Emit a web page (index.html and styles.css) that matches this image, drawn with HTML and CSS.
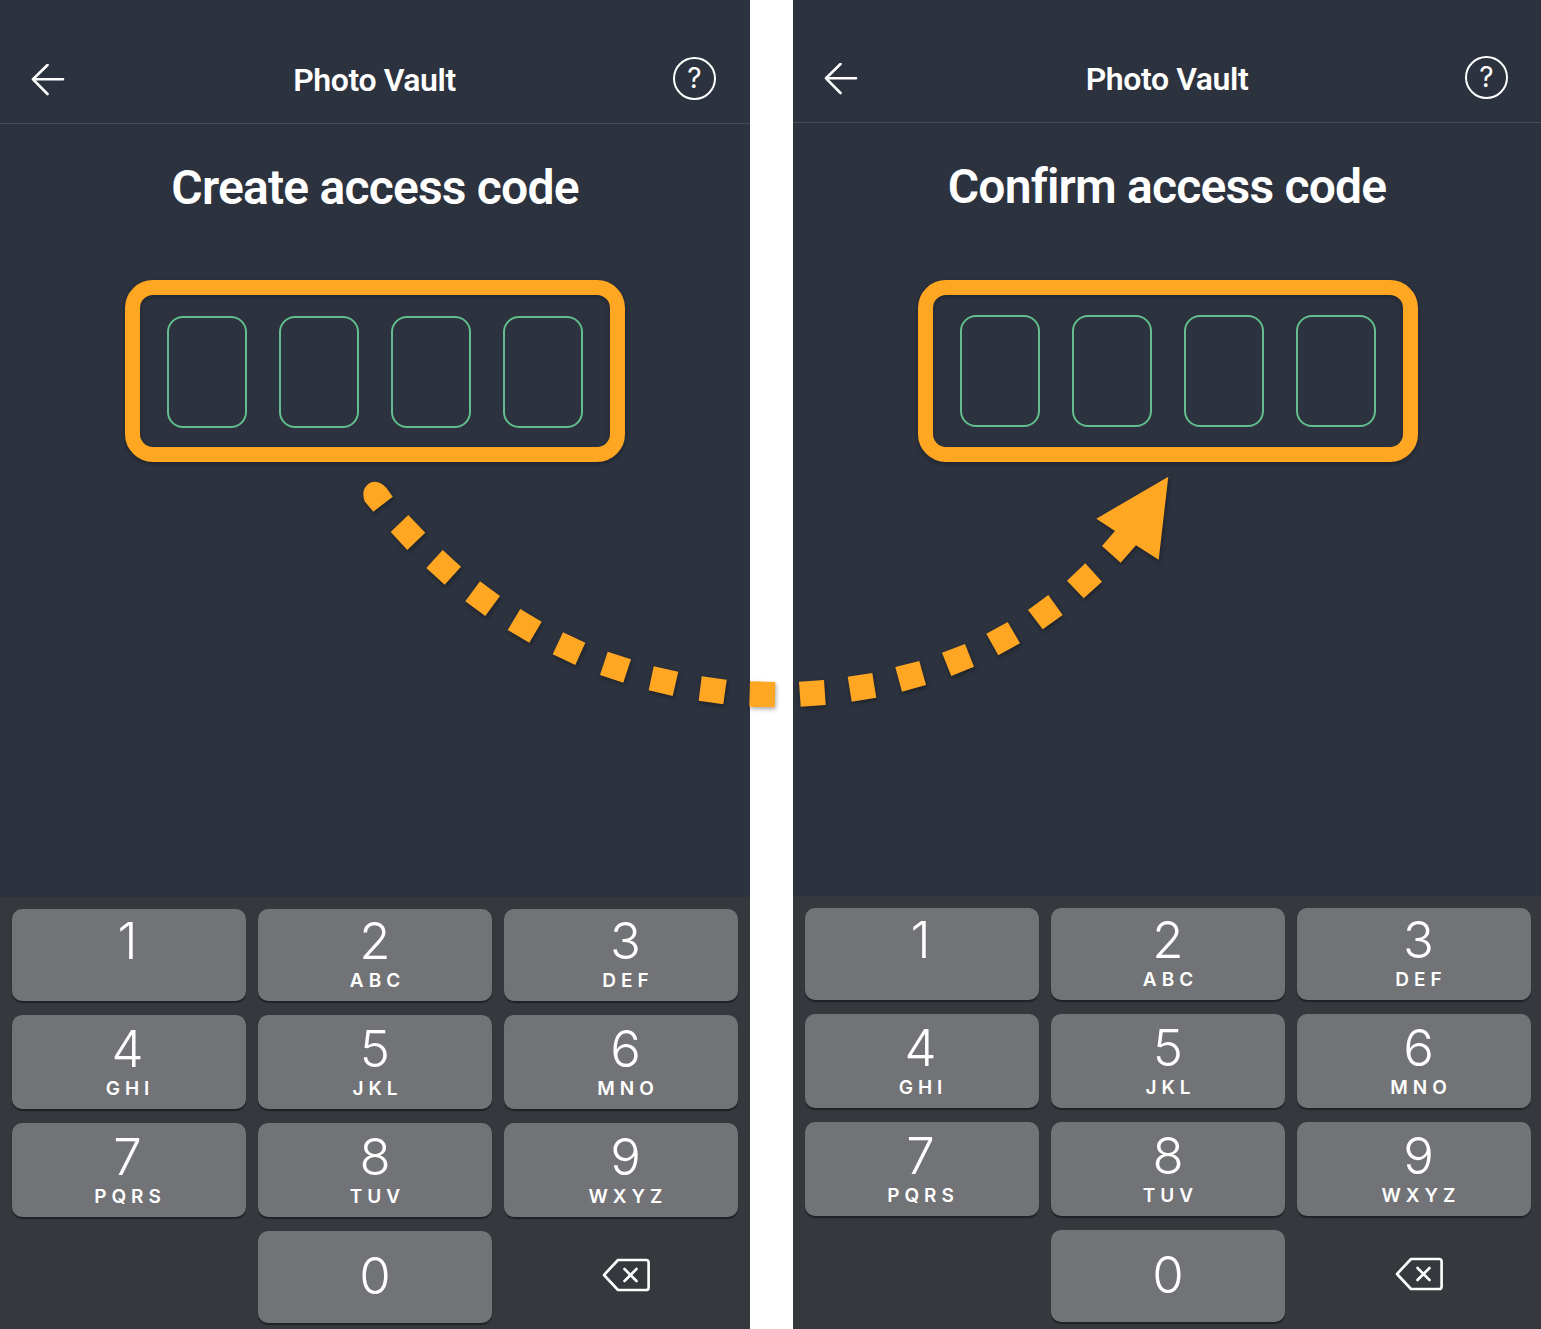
FILE: index.html
```html
<!DOCTYPE html>
<html lang="en">
    <head>
        <meta charset="utf-8">
        <title>Photo Vault access code</title>
        <link rel="stylesheet" href="styles.css">
    </head>
    <body>
        <div class="page">
            <div class="phone">
                <div class="header">
                    <svg class="backIcon" width="34" height="32" viewBox="0 0 34 32"><path d="M32 15.3H2M16.5 1 2 15.3 16.5 30"/></svg>
                    <div class="headerTitle">Photo Vault</div>
                    <div class="helpIcon">?</div>
                </div>
                <h1 class="heading">Create access code</h1>
                <div class="codeBox">
                    <div class="slot"></div>
                    <div class="slot"></div>
                    <div class="slot"></div>
                    <div class="slot"></div>
                </div>
                <div class="keypad">
                    <div class="key"><span class="digit">1</span><span class="letters"></span></div>
                    <div class="key"><span class="digit">2</span><span class="letters">ABC</span></div>
                    <div class="key"><span class="digit">3</span><span class="letters">DEF</span></div>
                    <div class="key"><span class="digit">4</span><span class="letters">GHI</span></div>
                    <div class="key"><span class="digit">5</span><span class="letters">JKL</span></div>
                    <div class="key"><span class="digit">6</span><span class="letters">MNO</span></div>
                    <div class="key"><span class="digit">7</span><span class="letters">PQRS</span></div>
                    <div class="key"><span class="digit">8</span><span class="letters">TUV</span></div>
                    <div class="key"><span class="digit">9</span><span class="letters">WXYZ</span></div>
                    <div class="keyBlank"></div>
                    <div class="key keyZero"><span class="digit">0</span></div>
                    <div class="keyDelete">
                        <svg class="deleteIcon" width="48" height="34" viewBox="0 0 48 34"><path d="M16 2h28a2.6 2.6 0 0 1 2.600 2.600v24.800a2.600 2.600 0 0 1-2.600 2.600h-28L2 17Z"/><path d="M22.500 11 34.500 23M34.500 11 22.500 23"/></svg>
                    </div>
                </div>
            </div>
            <div class="phone phoneRight">
                <div class="header">
                    <svg class="backIcon" width="34" height="32" viewBox="0 0 34 32"><path d="M32 15.3H2M16.5 1 2 15.3 16.5 30"/></svg>
                    <div class="headerTitle">Photo Vault</div>
                    <div class="helpIcon">?</div>
                </div>
                <h1 class="heading">Confirm access code</h1>
                <div class="codeBox">
                    <div class="slot"></div>
                    <div class="slot"></div>
                    <div class="slot"></div>
                    <div class="slot"></div>
                </div>
                <div class="keypad">
                    <div class="key"><span class="digit">1</span><span class="letters"></span></div>
                    <div class="key"><span class="digit">2</span><span class="letters">ABC</span></div>
                    <div class="key"><span class="digit">3</span><span class="letters">DEF</span></div>
                    <div class="key"><span class="digit">4</span><span class="letters">GHI</span></div>
                    <div class="key"><span class="digit">5</span><span class="letters">JKL</span></div>
                    <div class="key"><span class="digit">6</span><span class="letters">MNO</span></div>
                    <div class="key"><span class="digit">7</span><span class="letters">PQRS</span></div>
                    <div class="key"><span class="digit">8</span><span class="letters">TUV</span></div>
                    <div class="key"><span class="digit">9</span><span class="letters">WXYZ</span></div>
                    <div class="keyBlank"></div>
                    <div class="key keyZero"><span class="digit">0</span></div>
                    <div class="keyDelete">
                        <svg class="deleteIcon" width="48" height="34" viewBox="0 0 48 34"><path d="M16 2h28a2.6 2.6 0 0 1 2.600 2.600v24.800a2.600 2.600 0 0 1-2.600 2.600h-28L2 17Z"/><path d="M22.500 11 34.500 23M34.500 11 22.500 23"/></svg>
                    </div>
                </div>
            </div>
            <!-- dashed arrow runs over both screens and the white gap -->
            <svg class="dashArrow" width="1541" height="1329" viewBox="0 0 1541 1329">
                <path d="M373.300 511.700 392.700 496.700 386.700 488.300C383 484 379 481.700 375 481.700 368 481.700 363.300 488 363.300 494 363.300 497 364 500 365 501.700Z"/>
                <polygon points="408.300,515 425.300,532.700 407.300,550 390.700,532"/>
                <polygon points="442.700,550 461,566.700 444.700,584.700 426.300,568"/>
                <polygon points="480,581.300 500,596 485.300,616 465.300,601.300"/>
                <polygon points="520.300,609 541.700,621.700 529.300,642.700 507.700,630"/>
                <polygon points="563,632.300 585.300,642.700 575.300,665 552.700,654.300"/>
                <polygon points="607.700,651.700 631,659.300 623.300,682.700 600,675"/>
                <polygon points="653.700,666.300 678.300,671.700 672.700,696 648.700,690.300"/>
                <polygon points="701.700,676.300 726.700,679.700 723.300,704.300 698.700,700.700"/>
                <polygon points="750,681.300 775.300,682 774.700,707.300 749.300,706.700"/>
                <polygon points="799,681.700 824,680 825.700,705 800.700,706.700"/>
                <polygon points="847.700,676.700 872.300,673 876.300,697.700 851.700,701.700"/>
                <polygon points="895.300,667 919.300,661 926,685 902,691.700"/>
                <polygon points="942,652.700 965,644 974,666.700 951.300,676"/>
                <polygon points="986.300,633.700 1007.700,622 1020,643.300 998.300,655.300"/>
                <polygon points="1028,610 1048.300,595 1062.700,615 1042.700,629.300"/>
                <polygon points="1067,580.700 1085.300,563.300 1102,581.700 1083.700,598.300"/>
                <polygon points="1168.300,476.700 1096.300,518.700 1115,531 1102,546 1120.700,562.700 1136,545.300 1158.700,559.700"/>
            </svg>
        </div>
    </body>
</html>
```

FILE: styles.css
```css
html, body {
    margin: 0;
    background: white;
    overflow: hidden;
}
.page {
    position: relative;
    display: flex;
    gap: 43px;
    width: 1541px;
    height: 1329px;
    font-family: Roboto, "Liberation Sans", sans-serif;
    color: white;
}
.phone {
    display: flex;
    flex-direction: column;
    flex: none;
    width: 750px;
    height: 1329px;
    background: #2c323e;
}
.phoneRight {
    width: 748px;
    height: 1330px;
    margin-top: -1px;
}
.header {
    display: grid;
    grid-template-columns: 1fr auto 1fr;
    align-items: center;
    box-sizing: border-box;
    height: 124px;
    padding: 32px 34px 0 31px;
    border-bottom: 1px solid #494c57;
}
.phoneRight .header {
    padding-right: 33px;
}
.backIcon {
    margin-top: 4px;
    fill: none;
    stroke: white;
    stroke-width: 2.6;
    stroke-linecap: round;
    stroke-linejoin: round;
}
.headerTitle {
    margin-top: 4px;
    padding-left: 2px;
    font-size: 32px;
    font-weight: 600;
    letter-spacing: -0.4px;
}
.helpIcon {
    justify-self: end;
    box-sizing: border-box;
    width: 43px;
    height: 43px;
    margin-top: 1px;
    border: 2.5px solid white;
    border-radius: 50%;
    font-family: Inter, sans-serif;
    font-size: 28px;
    line-height: 38px;
    text-align: center;
}
.heading {
    margin: 36px 0 0;
    font-size: 48px;
    line-height: 56px;
    font-weight: 600;
    letter-spacing: -0.8px;
    text-align: center;
}
.codeBox {
    display: flex;
    justify-content: center;
    gap: 32px;
    box-sizing: border-box;
    width: 500px;
    height: 182px;
    margin: 64px 125px 0;
    padding-top: 21px;
    border: 15px solid #ffa722;
    border-radius: 28px;
    box-shadow: 0 2px 4px rgba(0, 0, 0, 0.3), inset 0 2px 4px rgba(0, 0, 0, 0.25);
}
.phoneRight .codeBox {
    margin-top: 65px;
    padding-top: 20px;
}
.slot {
    box-sizing: border-box;
    width: 80px;
    height: 112px;
    border: 2px solid #62bc8b;
    border-radius: 16px;
}
.keypad {
    display: grid;
    grid-template-columns: repeat(3, 234px);
    grid-template-rows: 92px 94px 94px 92px;
    column-gap: 12px;
    row-gap: 14px;
    box-sizing: border-box;
    height: 432px;
    margin-top: auto;
    padding: 12px 0 0 12px;
    background: #35383d;
}
.phoneRight .keypad {
    height: 433px;
}
.key {
    display: flex;
    flex-direction: column;
    align-items: center;
    justify-content: flex-end;
    box-sizing: border-box;
    padding-bottom: 9px;
    border-radius: 10px;
    background: #727377;
    box-shadow: 0 1.5px 1px #1f2126;
}
/* the labels are not quite centred on the outer columns */
.key:nth-child(3n+1) {
    padding-right: 3px;
}
.key:nth-child(3n) {
    padding-left: 9px;
}
.keyZero {
    justify-content: center;
    padding-bottom: 2px;
}
.keyDelete {
    display: flex;
    align-items: center;
    justify-content: center;
    padding: 0 0 4px 9px;
}
.deleteIcon {
    fill: none;
    stroke: white;
    stroke-width: 2.6;
    stroke-linecap: round;
    stroke-linejoin: round;
}
.digit {
    font-family: Inter, sans-serif;
    font-size: 51px;
    font-weight: 300;
    line-height: 52px;
}
.letters {
    min-height: 22px;
    margin-top: 3px;
    margin-right: -5px;
    font-family: Inter, sans-serif;
    font-size: 19px;
    font-weight: 600;
    line-height: 22px;
    letter-spacing: 5px;
}
.dashArrow {
    position: absolute;
    top: 0;
    left: 0;
    fill: #ffa722;
    filter: drop-shadow(1px 2px 2px rgba(0, 0, 0, 0.35));
    pointer-events: none;
}
```
